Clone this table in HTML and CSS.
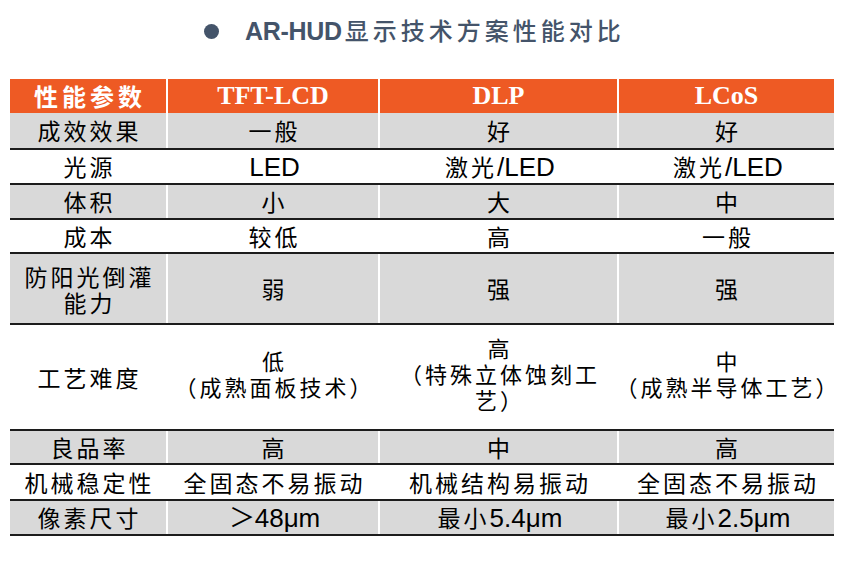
FILE: index.html
```html
<!DOCTYPE html>
<html lang="zh-CN">
<head>
<meta charset="utf-8">
<title>AR-HUD显示技术方案性能对比</title>
<link rel="stylesheet" href="styles.css">
</head>
<body>
<div class="page">
  <div class="title">
    <span class="dot"></span>
    <h1><span class="t-en">AR-HUD</span><span class="t-cn">显示技术方案性能对比</span></h1>
  </div>
  <div class="table">
    <div class="row head">
      <div class="cell cn">性能参数</div>
      <div class="cell en">TFT-LCD</div>
      <div class="cell en">DLP</div>
      <div class="cell en">LCoS</div>
    </div>
    <div class="row gray r1">
      <div class="cell">成效效果</div>
      <div class="cell">一般</div>
      <div class="cell">好</div>
      <div class="cell">好</div>
    </div>
    <div class="row r2">
      <div class="cell">光源</div>
      <div class="cell"><span class="lat">LED</span></div>
      <div class="cell">激光<span class="lat tight">/LED</span></div>
      <div class="cell">激光<span class="lat tight">/LED</span></div>
    </div>
    <div class="row gray r3">
      <div class="cell">体积</div>
      <div class="cell">小</div>
      <div class="cell">大</div>
      <div class="cell">中</div>
    </div>
    <div class="row r4">
      <div class="cell">成本</div>
      <div class="cell">较低</div>
      <div class="cell">高</div>
      <div class="cell">一般</div>
    </div>
    <div class="row gray r5">
      <div class="cell stack two"><span class="ln">防阳光倒灌</span><span class="ln">能力</span></div>
      <div class="cell">弱</div>
      <div class="cell">强</div>
      <div class="cell">强</div>
    </div>
    <div class="row r6">
      <div class="cell">工艺难度</div>
      <div class="cell stack multi"><span class="ln">低</span><span class="ln">（成熟面板技术）</span></div>
      <div class="cell stack multi"><span class="ln">高</span><span class="ln">（特殊立体蚀刻工</span><span class="ln">艺）</span></div>
      <div class="cell stack multi"><span class="ln">中</span><span class="ln">（成熟半导体工艺）</span></div>
    </div>
    <div class="row gray r7">
      <div class="cell">良品率</div>
      <div class="cell">高</div>
      <div class="cell">中</div>
      <div class="cell">高</div>
    </div>
    <div class="row r8">
      <div class="cell">机械稳定性</div>
      <div class="cell">全固态不易振动</div>
      <div class="cell">机械结构易振动</div>
      <div class="cell">全固态不易振动</div>
    </div>
    <div class="row gray r9">
      <div class="cell">像素尺寸</div>
      <div class="cell"><span class="lat">＞48μm</span></div>
      <div class="cell">最小<span class="lat tight">5.4μm</span></div>
      <div class="cell">最小<span class="lat tight">2.5μm</span></div>
    </div>
  </div>
</div>
</body>
</html>
```
FILE: styles.css
```css
html, body {
  margin: 0;
  padding: 0;
  background: #ffffff;
}

.page {
  width: 850px;
  height: 564px;
  overflow: hidden;
}

.title {
  height: 62px;
  display: flex;
  align-items: center;
  padding-left: 204px;
  gap: 26px;
  color: #44546a;
}

.dot {
  width: 15px;
  height: 15px;
  border-radius: 50%;
  background: #44546a;
  flex: none;
}

.title h1 {
  margin: 0;
  display: flex;
  align-items: baseline;
  font-weight: normal;
  line-height: 1;
}

.t-en {
  font-family: "Liberation Sans", Arial, sans-serif;
  font-weight: bold;
  font-size: 25px;
  letter-spacing: -0.3px;
}

.t-cn {
  font-family: "Noto Sans CJK SC", sans-serif;
  font-weight: 500;
  font-size: 24px;
  letter-spacing: 4px;
  margin-left: 3px;
}

.table {
  margin: 17px 0 0 10px;
  width: 824px;
  font-family: "Noto Sans CJK SC", sans-serif;
  color: #000;
}

.row {
  display: grid;
  grid-template-columns: 156px 212px 239px 217px;
  background: #ffffff;
  border-bottom: 2px solid #1c1c1c;
  box-sizing: border-box;
}

.row.gray {
  background: #d9d9d9;
}

.row.head {
  background: #ee5a24;
  border-bottom: none;
  height: 34px;
  color: #ffffff;
}

.r1 { height: 37px; }
.r2 { height: 35px; }
.r3 { height: 35px; }
.r4 { height: 34px; }
.r5 { height: 71px; }
.r6 { height: 106px; }
.r7 { height: 34px; }
.r8 { height: 36px; }
.r9 { height: 35px; }

.cell {
  display: flex;
  align-items: center;
  justify-content: center;
  text-align: center;
  white-space: nowrap;
  font-size: 23px;
  letter-spacing: 3px;
  text-indent: 3px;
  line-height: 1;
  border-left: 2px solid #ffffff;
}

.cell:first-child {
  border-left: none;
}

.cell.stack {
  flex-direction: column;
}

.ln {
  display: block;
  overflow: visible;
}

.two .ln {
  height: 26px;
  line-height: 26px;
}

.multi {
  font-size: 22px;
  padding-bottom: 8px;
  box-sizing: border-box;
}

.multi .ln {
  height: 26px;
  line-height: 26px;
}

.head .cell.cn {
  font-weight: bold;
  font-size: 24px;
  letter-spacing: 4px;
  text-indent: 4px;
}

.head .cell.en {
  font-family: "Liberation Serif", "Times New Roman", serif;
  font-weight: bold;
  font-size: 26px;
  letter-spacing: 0;
  text-indent: 0;
}

.lat {
  font-family: "Liberation Sans", Arial, sans-serif;
  font-size: 26px;
  letter-spacing: 0;
}

.lat.tight {
  margin-left: -3px;
}
```
